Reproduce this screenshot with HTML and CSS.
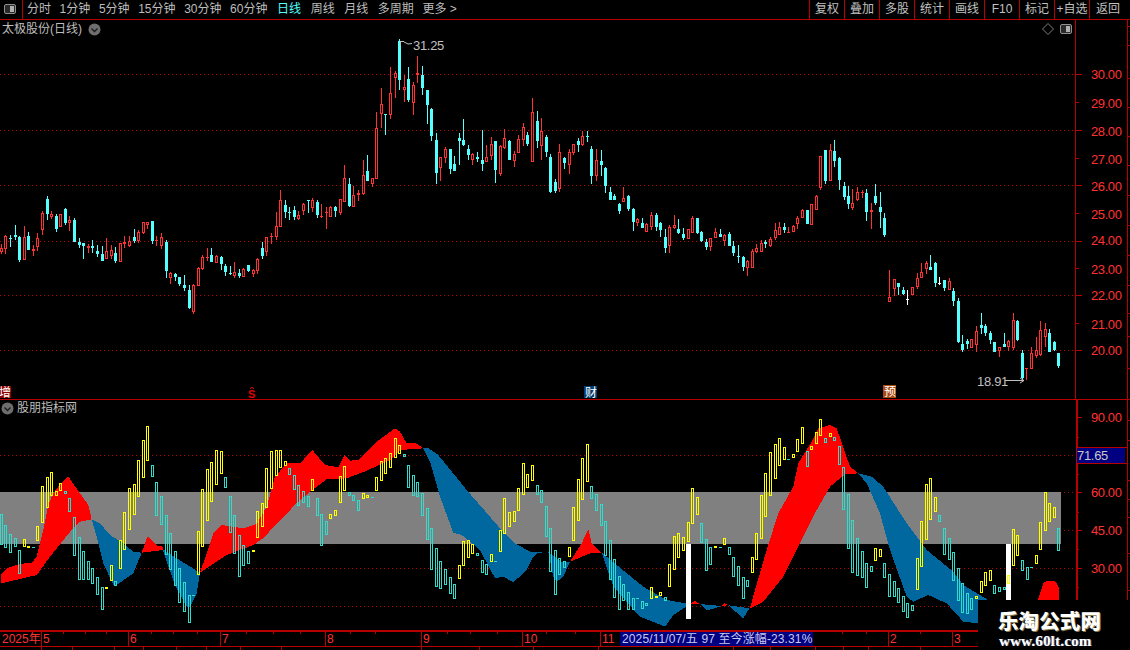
FILE: index.html
```html
<!DOCTYPE html>
<html lang="zh-CN">
<head>
<meta charset="utf-8">
<title>太极股份(日线)</title>
<link rel="stylesheet" href="styles.css">
</head>
<body>
<div class="app">
  <header class="toolbar">
    <div class="tb-icon">
      <svg width="12" height="11" viewBox="0 0 12 11"><rect class="ico-frame" x="0.5" y="0.5" width="11" height="9" rx="1.5"/><rect class="ico-fill" x="6" y="2" width="4" height="6"/></svg>
    </div>
    <nav class="tb-menu">
      <span>分时</span><span>1分钟</span><span>5分钟</span><span>15分钟</span><span>30分钟</span><span>60分钟</span>
      <span class="active wide">日线</span><span class="wide">周线</span><span class="wide">月线</span><span class="wide">多周期</span><span>更多 &gt;</span>
    </nav>
    <div class="tb-actions">
      <span>复权</span><span>叠加</span><span>多股</span><span>统计</span><span>画线</span><span>F10</span><span>标记</span><span>+自选</span><span class="last">返回</span>
    </div>
  </header>
  <main class="charts">
    <svg id="chart" class="chart" width="1130" height="630" viewBox="0 20 1130 630">
      <g id="layer-grid"></g>
      <g id="layer-ribbon"></g>
      <g id="layer-bars"></g>
      <g id="layer-candles"></g>
      <g id="layer-axis"></g>
      <g class="axis-text">
        <text x="1091" y="79">30.00</text><text x="1091" y="108">29.00</text><text x="1091" y="136">28.00</text>
        <text x="1091" y="164">27.00</text><text x="1091" y="191">26.00</text><text x="1091" y="219">25.00</text>
        <text x="1091" y="245">24.00</text><text x="1091" y="274">23.00</text><text x="1091" y="300">22.00</text>
        <text x="1091" y="329">21.00</text><text x="1091" y="355">20.00</text>
        <text x="1091" y="422">90.00</text><text x="1091" y="497">60.00</text><text x="1091" y="535">45.00</text><text x="1091" y="573">30.00</text>
      </g>
      <g class="note-text">
        <text x="413" y="50">31.25</text>
        <text x="977" y="386">18.91</text>
      </g>
      <path class="note-line" d="M400.500 46V41.500H404M404 42L408 44L412 43.500M1005 380.500H1024M1020 378L1024 380.500L1020 383"/>
      <g class="badges">
        <rect class="bd-zeng" x="0" y="386" width="11" height="12"/><text x="-1" y="397">增</text>
        <rect class="bd-cai" x="584" y="386" width="13" height="12"/><text x="585" y="397">财</text>
        <rect class="bd-yu" x="883" y="385" width="13" height="13"/><text x="884" y="396">预</text>
      </g>
      <text class="s-mark" x="248" y="398">S</text>
      <path class="s-hat" d="M250 389L252 387L254 389"/>
      <g class="date-text">
        <text x="2" y="643">2025年</text><text x="43" y="643">5</text><text x="130" y="643">6</text><text x="222" y="643">7</text>
        <text x="327" y="643">8</text><text x="423" y="643">9</text><text x="524" y="643">10</text><text x="602" y="643">11</text>
        <text x="890" y="643">2</text><text x="954" y="643">3</text>
      </g>
      <rect class="tip-bg" x="620" y="632" width="193" height="14"/>
      <text class="tip-text" x="622" y="643">2025/11/07/五 97 至今涨幅-23.31%</text>
      <rect class="value-bg" x="1077" y="448" width="48" height="15"/>
      <text class="value-text" x="1077" y="460">71.65</text>
    </svg>
    <div class="pane-title title-top">太极股份(日线)<svg class="chev" width="13" height="13" viewBox="0 0 13 13"><circle cx="6.500" cy="6.500" r="6"/><path d="M3.500 5.500L6.500 8.500L9.500 5.500"/></svg></div>
    <div class="pane-tools">
      <svg width="36" height="12" viewBox="0 0 36 12"><path class="ico-line" d="M6 .5L11.500 6L6 11.500L.5 6Z"/><rect class="ico-frame" x="18.500" y="1.500" width="11" height="9" rx="1.500"/><rect class="ico-fill" x="24" y="3" width="4" height="6"/></svg>
    </div>
    <div class="pane-title title-bottom"><svg class="chev" width="13" height="13" viewBox="0 0 13 13"><circle cx="6.500" cy="6.500" r="6"/><path d="M3.500 5.500L6.500 8.500L9.500 5.500"/></svg>股朋指标网</div>
    <div class="watermark">
      <div class="wm-cn">乐淘公式网</div>
      <div class="wm-en">www.60lt.com</div>
    </div>
  </main>
</div>
<script src="chart.js"></script>
</body>
</html>
```
FILE: styles.css
```css
* { box-sizing: border-box; }
html, body { margin: 0; padding: 0; background: #000; }
body { width: 1130px; height: 650px; overflow: hidden; font-family: "Liberation Sans", "Noto Sans CJK SC", sans-serif; font-size: 12px; color: #c0c0c0; }
.app { display: flex; flex-direction: column; width: 1130px; height: 650px; }
.toolbar { display: flex; align-items: stretch; height: 20px; border-bottom: 1px solid #b40000; flex: none; }
.tb-icon { width: 23px; border-right: 1px solid #b40000; padding: 4px 0 0 4px; flex: none; }
.tb-icon svg { display: block; }
.ico-frame { fill: #2a2a2a; stroke: #909090; }
.ico-fill { fill: #b0b0b0; }
.ico-line { fill: none; stroke: #808080; }
.tb-menu { display: flex; gap: 8.600px; padding-left: 4px; align-items: center; color: #bdbdbd; line-height: 19px; white-space: nowrap; }
.tb-menu .wide { margin-left: 1px; }
.tb-menu .active { color: #54ffff; }
.tb-actions { display: flex; margin-left: auto; }
.tb-actions span { width: 35px; border-left: 1px solid #b40000; text-align: center; line-height: 19px; white-space: nowrap; }
.tb-actions .last { width: 41px; padding-right: 4px; }
.charts { position: relative; flex: 1; }
.chart { display: block; }
.axis-text text { fill: #ff3232; font-size: 13px; letter-spacing: -.4px; }
.note-text text { fill: #c0c0c0; font-size: 13px; letter-spacing: -.3px; }
.note-line { fill: none; stroke: #c0c0c0; }
.badges text { fill: #fff; font-size: 12px; }
.bd-zeng { fill: #8c0000; }
.bd-cai { fill: #003c70; }
.bd-yu { fill: #a84a10; }
.s-mark { fill: #e00000; font-size: 11px; font-weight: bold; }
.s-hat { fill: none; stroke: #e00000; }
.date-text text { fill: #ff3232; font-size: 12px; }
.tip-bg, .value-bg { fill: #000080; }
.tip-text { fill: #c8c8f0; font-size: 12px; letter-spacing: .12px; }
.value-text { fill: #c8c8c8; font-size: 13px; letter-spacing: -.3px; }
.pane-title { position: absolute; left: 2px; display: flex; align-items: center; gap: 6px; line-height: 14px; color: #bdbdbd; white-space: nowrap; }
.title-top { top: 2px; }
.title-bottom { top: 381px; left: 1px; gap: 3px; }
.chev circle { fill: #6e6e6e; }
.chev path { fill: none; stroke: #1c1c1c; stroke-width: 1.400; }
.pane-tools { position: absolute; left: 1042px; top: 3px; line-height: 0; }
.watermark { position: absolute; left: 978px; top: 580px; width: 152px; height: 50px; background: #000; color: #fff; }
.wm-cn { margin: 9px 0 0 20px; font-family: "Noto Sans CJK SC", sans-serif; font-weight: 900; font-size: 20.500px; line-height: 22px; letter-spacing: .1px; text-shadow: 1px 1px 0 #8a7a50; white-space: nowrap; }
.wm-en { margin: 3px 0 0 21px; font-family: "Liberation Serif", serif; font-weight: bold; font-size: 15px; line-height: 14px; letter-spacing: .2px; text-shadow: 1px 0 0 #6a6a88; white-space: nowrap; }
```
FILE: chart.js
```js
var NS = 'http://www.w3.org/2000/svg';
function el(parent, name, attrs) {
  var n = document.createElementNS(NS, name);
  for (var k in attrs) n.setAttribute(k, attrs[k]);
  n.setAttribute('shape-rendering', 'crispEdges');
  parent.appendChild(n);
  return n;
}
function rect(p, x, y, w, h, fill) { return el(p, 'rect', {x: x, y: y, width: w, height: h, fill: fill}); }

var RED = '#ff3232', CYAN = '#54ffff', AXIS = '#b80000', GRID = '#c00000';

/* ---------- grid ---------- */
var grid = document.getElementById('layer-grid');
function dotted(y, x2) {
  el(grid, 'line', {x1: 0, x2: x2, y1: y + .5, y2: y + .5, stroke: GRID, 'stroke-dasharray': '1 3'});
}
[74, 130, 185, 241, 295, 350].forEach(function (y) { dotted(y, 1075); });
[455, 492, 530, 568, 606].forEach(function (y) { dotted(y, 1075); });
rect(grid, 0, 492, 1061, 52, '#808080');

/* ---------- ribbons: [colour, x0, y0, points in 3x crop units] ---------- */
var R = '#ff0000', B = '#00689e';
var ribbons = [
  [R, 0, 380, '3,585 20,565 40,558 60,552 95,548 110,530 130,450 145,375 160,340 175,320 205,290 240,340 265,375 275,418 240,425 215,450 190,480 150,530 110,585 60,597 3,610'],
  [B, 0, 380, '275,418 300,430 330,465 360,483 400,515 425,518 420,530 400,580 350,615 340,615 310,550 290,470'],
  [R, 0, 380, '425,518 443,468 470,497 488,500 488,510'],
  [B, 0, 380, '488,508 530,535 600,578 590,640 570,680 560,680 525,615 500,545'],
  [R, 0, 380, '600,578 620,520 640,460 665,435 700,440 730,445 770,432 800,380 825,290 860,250 900,250 937,210 975,255 1015,262 1033,225 1050,242 1075,240 1130,185 1185,145 1200,155 1220,190 1245,188 1270,205 1200,210 1170,240 1100,272 1040,295 980,298 930,335 890,370 840,420 790,475 760,495 680,525'],
  [B, 400, 380, '70,205 85,205 115,225 200,330 300,445 345,490 390,515 440,517 415,518 400,530 380,570 340,607 310,590 285,595 240,510 185,465 160,458 120,350 90,245'],
  [B, 400, 380, '445,517 485,545 510,545 490,590 470,605 460,590'],
  [R, 400, 380, '510,545 545,490 565,447 575,490 605,518 570,520'],
  [B, 400, 380, '605,518 650,555 730,620 800,660 870,672 820,705 795,740 720,710 640,620'],
  [R, 400, 380, '870,672 885,663 900,672'],
  [B, 400, 380, '900,672 965,678 920,692'],
  [R, 400, 380, '965,678 973,670 985,676'],
  [B, 400, 380, '985,676 1048,685 1030,715'],
  [R, 750, 380, '0,685 15,630 50,510 85,400 130,320 145,250 185,185 205,145 240,135 260,145 300,260 325,280 285,283 240,320 200,390 150,490 100,590 40,665'],
  [B, 750, 380, '325,280 365,290 400,320 470,430 530,510 610,575 640,615 715,660 684,730 640,725 590,670 535,645 490,665 470,650 420,510 390,400 350,310'],
  [R, 750, 380, '864,660 880,610 890,603 915,603 927,622 927,660']
];
var rib = document.getElementById('layer-ribbon');
ribbons.forEach(function (r) {
  var pts = r[3].split(' ').map(function (p) {
    var a = p.split(',');
    return (r[1] + a[0] / 3).toFixed(1) + ',' + (r[2] + a[1] / 3).toFixed(1);
  }).join(' ');
  el(rib, 'polygon', {points: pts, fill: r[0]});
});
rect(rib, 686, 544, 5, 75, '#fff');
rect(rib, 1006, 544, 5, 56, '#fff');

/* ---------- indicator bars: colour(y/c) x top bottom in 3x crop units ---------- */
var barSets = [
  [0, 380, 'c3,403,493 c16,436,502 c31,463,517 c46,475,499 c58,511,580 y73,478,499 y85,497,498 c100,502,505 y112,439,481 y127,319,427 y142,292,382 y154,277,346 y169,334,344 y181,310,331 c196,334,340 c208,355,394 c223,412,526 c238,472,598 c250,514,598 c265,544,598 c277,565,610 c292,592,643 c307,622,688 y319,620,622 y334,556,601 c346,604,616 y361,481,565 y373,397,508 y388,325,448 y403,313,403 y415,241,349 y430,181,292 y442,139,241 c457,256,289 c469,307,406 c484,349,433 c499,406,523 c511,460,568 c526,514,616 c538,565,667 c553,607,694 c568,646,727 c580,646,647 y595,454,583 y607,328,499 y622,268,421 y634,247,364 y649,211,313 y664,214,280 c676,292,322 c691,349,457 c703,406,520 c718,466,589 c730,496,556 c745,514,550 y760,511,514 y772,394,472 y787,370,439 y799,265,382 y814,214,325 y829,211,286 y841,211,262 y856,244,256 c868,265,283 c883,286,328 c895,316,376 c910,334,367 c925,349,379 y937,298,331 c952,355,406 c964,403,496 c979,424,463 y991,403,415 y1006,391,406 y1021,289,367 y1033,259,331 c1048,337,346 c1060,346,361 c1075,361,391 y1090,340,355 y1102,346,352 c1117,351,352 y1129,292,331 y1144,244,301 y1156,235,280 y1171,220,262 y1186,175,232 y1198,196,220'],
  [400, 380, 'c13,223,229 c25,256,322 c40,286,346 c52,307,349 c67,340,406 c82,385,478 c94,445,568 c109,505,619 c121,544,625 c136,568,613 c151,592,640 c163,613,655 y178,556,595 y190,484,556 y205,481,532 y217,493,520 c232,520,526 c247,541,577 c259,553,583 y274,523,544 c286,544,547 y301,451,514 y313,355,460 y328,397,439 y343,394,424 y355,325,391 y370,250,343 y382,283,322 y397,256,301 c412,316,343 c424,331,367 c439,379,469 c451,445,574 c466,511,643 c478,535,583 c493,544,562 y508,502,529 y520,382,481 y535,298,421 y547,235,358 y562,193,304 c574,319,355 c589,343,391 c604,373,436 c616,424,526 c631,481,598 c643,538,652 c658,589,688 c670,613,661 c685,637,688 c700,655,688 c712,654,655 c727,664,685 c739,670,676 y754,622,655 y769,649,652 y781,637,646 c796,652,661 y808,553,619 y823,469,568 y835,460,532 y850,472,511 y865,427,484 y877,325,430 y892,352,403 c904,430,487 c919,478,571 c931,502,553 y946,499,502 c961,501,502 y973,475,493 c988,502,523 c1000,532,589 c1015,559,616 c1030,592,655 c1042,601,619 y1057,532,577 y1069,460,538 y1084,346,475 y1096,280,409 y1111,217,346 y1126,193,295 y1138,175,256 y1153,202,238 c1165,238,239 y1180,223,232 y1192,178,214'],
  [750, 380, 'y157,142,190 c172,214,259 y184,199,208 y199,157,190 y211,118,166 c226,175,187 y241,160,169 c253,172,181 c268,199,253 c280,262,388 c295,343,505 c307,421,577 c322,475,586 c337,514,592 c349,550,622 c364,559,574 y376,505,541 y391,508,529 c403,550,592 c418,583,649 c433,604,649 c445,625,667 c460,649,694 c472,670,712 c487,676,691 y502,535,628 y514,424,559 y529,313,478 y541,295,418 y556,352,394 c568,406,424 c583,445,523 c598,475,538 c610,517,601 c625,565,661 c637,610,697 c652,640,700 c664,655,688 y679,649,655 y694,604,637 y706,577,616 y721,571,601 c733,616,640 c748,622,634 c763,622,628 y775,586,610 y790,448,556 y802,466,526 c817,541,571 c832,562,598 c844,562,563 y859,526,550 y871,427,508 y886,337,451 y898,370,424 y913,382,412 c925,445,511']
];
var bars = document.getElementById('layer-bars');
barSets.forEach(function (s) {
  s[2].split(' ').forEach(function (b) {
    var col = b[0] === 'y' ? '#ffff00' : '#30dccc';
    var a = b.slice(1).split(',').map(Number);
    var px = Math.floor(s[0] + a[0] / 3);
    var t = Math.round(s[1] + a[1] / 3), e = Math.round(s[1] + a[2] / 3);
    if (e - t < 2) { rect(bars, px - 1, t, 3, 1 + (b[0] === 'y' ? 1 : 0), col); return; }
    el(bars, 'rect', {x: px - .5, y: t + .5, width: 2, height: e - t, fill: 'none', stroke: col});
  });
});

/* ---------- candles: colour x high top bottom low in 3x crop units ---------- */
var candleSets = [
  [0, 190, 'r4,162,175,186,192 r16,135,138,176,192 c31,135,145,147,172 c46,105,135,142,150 c58,138,141,211,216 r73,108,141,209,209 c85,126,138,180,180 r100,165,177,183,198 r112,130,144,171,183 r127,63,69,120,135 c142,18,27,72,90 r154,63,72,81,87 c169,72,78,117,126 r181,72,72,110,110 c196,54,57,99,105 r208,78,90,99,123 c223,84,90,156,156 c238,144,156,164,174 c250,160,160,168,207 r265,162,168,174,189 c277,150,168,174,189 c292,165,183,192,201 c307,168,192,213,213 r319,144,183,207,207 r334,165,180,198,207 c346,171,189,213,219 r361,159,160,216,216 r373,138,156,162,174 r388,138,153,168,171 c403,117,141,153,159 r415,120,126,153,159 r430,96,96,129,132 r442,96,96,105,117 c457,93,93,153,162 r469,138,150,152,168 r484,129,141,168,177 c499,150,156,243,264 r511,246,249,264,282 c526,249,252,261,273 c538,261,261,282,288 c553,255,285,294,303 c568,285,300,354,357 r580,282,285,366,372 r595,231,234,288,288 r607,195,201,237,240 r622,174,201,204,213 c634,174,195,216,216 r649,195,198,219,219 c664,198,201,222,240 c676,222,228,246,258 c691,228,250,252,255 r703,216,246,258,264 c718,237,249,258,264 r730,234,237,261,261 c745,225,225,243,246 r760,237,240,252,261 r772,204,207,243,252 c787,156,174,198,207 r799,141,141,186,198 r814,129,138,141,162 r829,66,108,141,150 r841,0,30,111,111 c856,30,45,66,84 c868,51,66,68,90 c883,48,60,81,90 r895,63,75,87,90'],
  [240, 80, 'r190,369,371,394,405 c205,360,361,362,399 r217,354,361,384,396 c232,360,366,405,414 r244,372,408,410,414 r259,381,396,398,447 r271,378,381,411,411 c286,378,381,393,411 r301,357,358,399,405 r313,255,295,365,365 c328,294,312,378,381 r340,318,346,380,381 r355,330,339,345,363 r370,240,286,342,345 c382,225,273,303,303'],
  [360, 30, 'r37,444,445,462,471 r50,246,295,446,446 r64,174,222,252,294 c76,252,252,255,315 r91,111,190,255,267 r106,124,130,143,204 c118,27,34,150,180 r133,135,171,179,216 c145,111,147,211,216 r160,156,165,219,255 r172,78,129,135,159 c187,108,135,174,195 c202,180,181,225,282 c214,234,237,318,333 c229,309,330,429,462 r241,381,381,413,453 r256,351,357,384,399 c271,357,357,417,432 c283,378,402,423,423 c298,309,324,333,405 c310,267,330,345,348 c325,345,357,375,390 r337,369,372,390,405 c352,366,381,387,396 c367,300,390,402,423 r379,345,381,396,396 r394,321,342,378,390 c406,333,333,420,459 r421,345,348,432,438 r433,297,324,354,357 c448,330,333,390,390 r463,363,372,393,411 r475,315,327,369,369 r490,279,291,330,348 c502,306,315,342,348 r517,204,246,396,396 c532,243,273,333,354 r544,264,303,348,390 c559,315,321,366,381 c571,372,381,486,489 c586,447,456,483,489 r598,342,366,477,486 c613,381,384,399,417 r628,357,366,405,432 r640,342,342,369,375 c655,324,333,345,366 r667,303,318,345,348 c682,303,318,320,336 c694,348,357,438,462 r709,357,390,438,453 c724,360,393,405,438 c736,411,414,468,489 c751,471,486,510,510 c763,492,498,510,510'],
  [600, 130, 'c58,219,222,243,252 r70,171,204,215,216 c85,195,198,237,243 c100,234,237,276,303 r112,264,268,279,288 c127,264,279,294,294 r139,279,281,305,305 r154,246,256,291,300 c169,249,255,291,303 c181,276,279,300,321 c196,297,321,354,369 r208,285,292,348,369 r223,255,286,295,297 c235,267,297,309,312 c250,294,312,324,330 r265,297,298,327,327 r277,258,265,308,308 c292,264,264,309,312 c304,303,306,333,336 c319,327,336,351,360 r331,324,325,351,363 r346,294,306,324,324 c361,297,312,321,321 r373,312,315,333,348 c388,306,312,348,348 c400,333,348,369,378 c415,345,379,381,399 c430,378,381,411,423 r442,390,393,414,438 r457,357,363,414,414 r469,342,355,366,369 r484,330,339,366,366 c496,330,336,342,354 r511,321,327,348,351 r526,279,300,324,330 r538,276,291,315,315 c553,279,291,300,309 r565,291,306,308,309 r580,285,288,306,306 r592,258,264,282,297 r607,237,240,264,264 c622,240,240,282,282 r634,222,223,285,285 r649,195,198,240,240 r661,78,79,174,180 c676,60,60,153,162 r691,42,61,153,153 c703,30,63,93,111 c718,81,84,150,180 c733,156,168,201,210 c745,168,198,222,237 r757,177,220,235,240 r772,171,186,210,213 r787,180,187,189,204 c799,177,189,246,273 r814,219,240,245,297 c826,162,198,219,225 c841,186,231,246,294 c853,249,264,315,321'],
  [880, 250, 'r28,60,142,155,155 r43,87,88,117,138 c55,99,100,111,135 c70,111,120,132,135 w82,120,147,149,165 r97,111,112,135,135 r112,69,84,111,117 r124,39,66,84,84 r139,33,39,57,72 c151,15,51,60,60 c166,36,39,99,111 w178,81,99,103,105 c193,90,90,114,123 r208,84,93,120,120 c220,114,123,153,168 c235,144,153,276,279 c247,255,282,300,306 c262,267,273,282,297 r274,267,267,294,294 r289,228,243,285,306 c304,189,225,234,252 c316,222,228,249,258 c331,243,249,270,282 c343,276,276,306,306 r358,291,292,303,321 c373,249,282,291,291 r385,270,273,291,303 r400,189,210,294,300 c412,210,213,270,273 c427,300,309,384,390 r439,354,354,358,390 r454,291,309,357,357 r469,261,300,318,324 r481,213,240,315,318 r496,219,237,261,291 c508,237,249,306,306 c523,273,276,300,303 c535,309,309,348,354']
];
var candles = document.getElementById('layer-candles');
candleSets.forEach(function (s) {
  s[2].split(' ').forEach(function (c) {
    var kind = c[0];
    var a = c.slice(1).split(',').map(Number);
    var px = Math.floor(s[0] + a[0] / 3);
    var y = function (v) { return Math.round(s[1] + v / 3); };
    var h = y(a[1]), t = y(a[2]), b = y(a[3]), l = y(a[4]);
    var col = kind === 'r' ? RED : kind === 'w' ? '#ffffff' : CYAN;
    rect(candles, px, h, 1, Math.max(1, l - h), col);
    if (b - t < 2) { rect(candles, px - 1, t, 3, 1, col); return; }
    if (kind === 'r') {
      el(candles, 'rect', {x: px - .5, y: t + .5, width: 2, height: b - t - 1, fill: '#000', stroke: col});
    } else {
      rect(candles, px - 1, t, 3, b - t, col);
    }
  });
});

/* ---------- axes ---------- */
var ax = document.getElementById('layer-axis');
function hl(x1, x2, y, col) { rect(ax, x1, y, x2 - x1, 1, col || AXIS); }
function vl(x, y1, y2, col) { rect(ax, x, y1, 1, y2 - y1, col || AXIS); }
hl(0, 1130, 399);
vl(1075, 20, 400);
vl(1076, 400, 600);
vl(1077, 400, 600);
vl(1127, 20, 600);
[74, 130, 185, 241, 295, 350, 417, 492, 530, 568].forEach(function (y) { hl(y > 400 ? 1077 : 1075, 1082, y); });
[102, 158, 213, 268, 323, 437, 474, 512, 549, 587].forEach(function (y) { hl(y > 400 ? 1077 : 1075, 1079, y); });
[26, 45, 78, 107, 136, 165, 195, 225, 255, 285, 313, 336, 368, 420, 440, 480, 499, 517, 553, 590].forEach(function (y) { hl(1127, 1130, y); });
hl(1077, 1127, 447);
hl(1077, 1127, 463);
rect(ax, 0, 630, 1130, 2, AXIS);
hl(0, 1130, 646);
[41, 128, 220, 325, 421, 522, 600, 620, 888, 952].forEach(function (x) { vl(x, 631, 646); });
[63, 85, 106, 151, 173, 197, 246, 273, 300, 350, 375, 447, 470, 497, 546, 575, 650, 680, 716, 770, 842, 866, 920].forEach(function (x) { vl(x, 632, 634); });
[41, 72, 114, 143, 176, 206, 240, 281, 421, 479, 533, 598, 733, 770, 815, 843, 868, 920].forEach(function (x) { vl(x, 647, 650); });
```
